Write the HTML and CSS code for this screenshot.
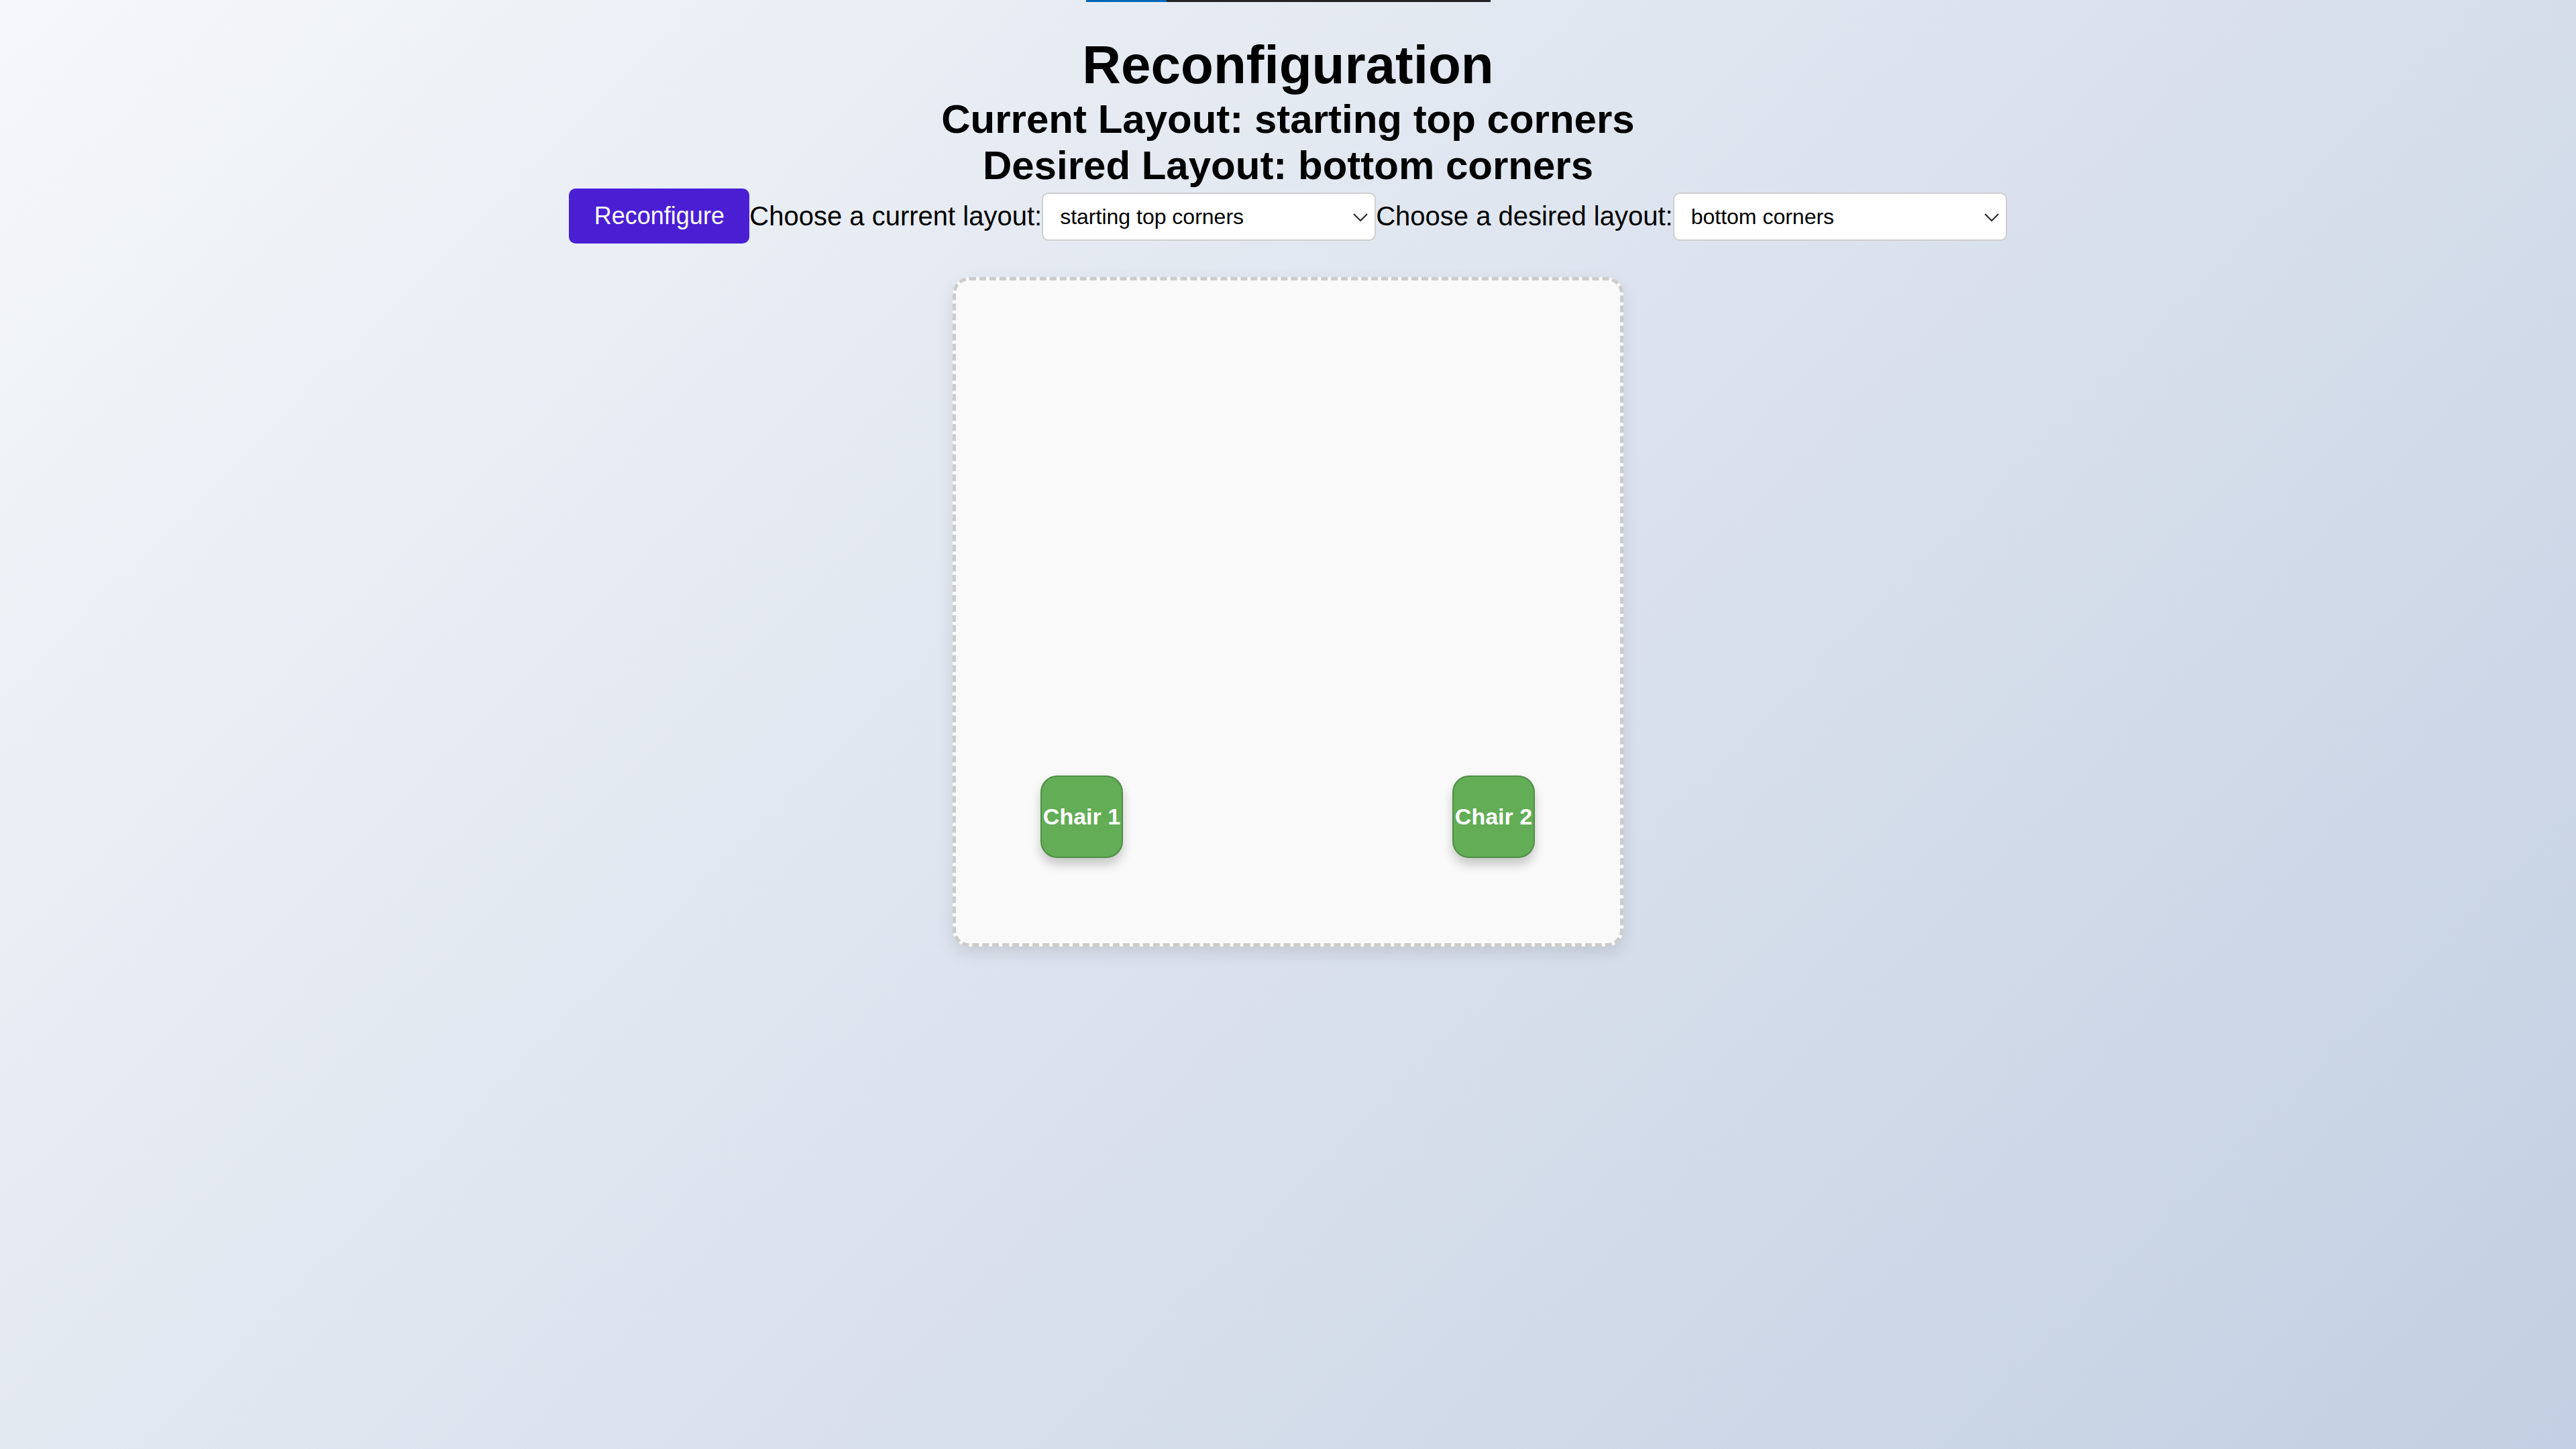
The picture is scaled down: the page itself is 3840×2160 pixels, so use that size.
FILE: index.html
```html
<!DOCTYPE html>
<html lang="en">
<head>
<meta charset="utf-8">
<title>Reconfiguration</title>
<link rel="stylesheet" href="styles.css">
</head>
<body>
<header class="header">
  <div class="progress"><div class="progress-fill"></div></div>
  <h1 class="title">Reconfiguration</h1>
  <h2 class="subtitle">Current Layout: starting top corners</h2>
  <h2 class="subtitle">Desired Layout: bottom corners</h2>
</header>
<div class="controls">
  <button class="btn">Reconfigure</button>
  <label class="label" for="current">Choose a current layout:</label>
  <span class="select-wrap">
    <select id="current" class="select">
      <option>starting top corners</option>
    </select>
    <svg class="chev" width="22" height="12" viewBox="0 0 22 12"><path d="M1 1 L11 11 L21 1" fill="none" stroke="#222" stroke-width="2"/></svg>
  </span>
  <label class="label" for="desired">Choose a desired layout:</label>
  <span class="select-wrap">
    <select id="desired" class="select">
      <option>bottom corners</option>
    </select>
    <svg class="chev" width="22" height="12" viewBox="0 0 22 12"><path d="M1 1 L11 11 L21 1" fill="none" stroke="#222" stroke-width="2"/></svg>
  </span>
</div>
<main class="room">
  <div class="chair chair-1">Chair 1</div>
  <div class="chair chair-2">Chair 2</div>
</main>
</body>
</html>
```

FILE: styles.css
```css
html, body {
  margin: 0;
  padding: 0;
}
body {
  min-height: 100vh;
  background: linear-gradient(135deg, #f5f7fa 0%, #c3cfe2 100%);
  font-family: "Liberation Sans", Arial, sans-serif;
  color: #000;
}
.header {
  display: flex;
  flex-direction: column;
  align-items: center;
}
.progress {
  width: 603px;
  height: 3px;
  background: #222;
  display: flex;
}
.progress-fill {
  width: 120px;
  height: 100%;
  background: #0067b8;
}
.title {
  margin: 48px 0 0;
  font-size: 80px;
  font-weight: bold;
  line-height: normal;
}
.subtitle {
  margin: 0;
  font-size: 60px;
  font-weight: bold;
  line-height: normal;
}
.controls {
  display: flex;
  justify-content: center;
  align-items: center;
}
.btn {
  font-family: "Liberation Sans", Arial, sans-serif;
  font-size: 36px;
  color: #fff;
  background: #4a1fd4;
  border: none;
  border-radius: 10px;
  width: 269px;
  height: 82px;
  padding: 0;
}
.label {
  font-size: 40px;
  line-height: normal;
}
.select-wrap {
  position: relative;
  display: inline-flex;
  margin-top: 2px;
}
.select {
  appearance: none;
  -webkit-appearance: none;
  width: 498px;
  height: 72px;
  box-sizing: border-box;
  padding: 0 0 0 25px;
  font-family: "Liberation Sans", Arial, sans-serif;
  font-size: 32px;
  color: #000;
  background: #fff;
  border: 2px solid #cfcfcf;
  border-radius: 10px;
}
.chev {
  position: absolute;
  right: 12px;
  top: 31px;
  pointer-events: none;
}
.room {
  position: relative;
  width: 1000px;
  height: 998px;
  box-sizing: border-box;
  margin: 50px auto 0;
  background: #f9f9f9;
  border: 5px dashed #cccccc;
  border-radius: 25px;
  box-shadow: 0 10px 25px rgba(0, 0, 0, 0.1);
}
.chair {
  position: absolute;
  width: 123px;
  height: 123px;
  box-sizing: border-box;
  display: flex;
  align-items: center;
  justify-content: center;
  background: #62ad56;
  border: 2px solid #4f8e45;
  border-radius: 25px;
  color: #fff;
  font-size: 34px;
  font-weight: bold;
  white-space: nowrap;
  box-shadow: 0 10px 15px rgba(0, 0, 0, 0.2);
}
.chair-1 {
  left: 126px;
  top: 738px;
}
.chair-2 {
  left: 740px;
  top: 738px;
}
```
